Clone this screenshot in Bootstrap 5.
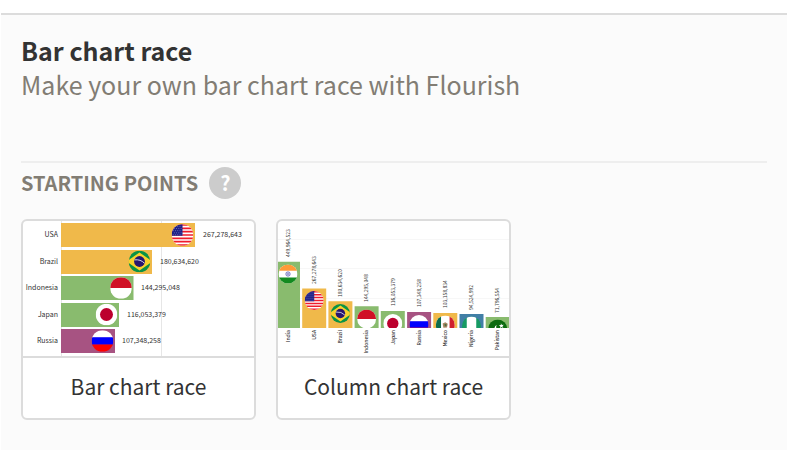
<!DOCTYPE html>
<html lang="en">
<head>
<meta charset="utf-8">
<meta name="viewport" content="width=device-width, initial-scale=1">
<title>Bar chart race</title>
<link href="https://cdn.jsdelivr.net/npm/bootstrap@5.3.0/dist/css/bootstrap.min.css" rel="stylesheet">
<style>
body { font-family: "Noto Sans CJK SC", "Noto Sans", sans-serif; color: #333; background: #fff; }
.template-group { margin: 13px 19px 6px 1px; padding: 18px 20px 30px; background: #fbfbfb; border-top: 2px solid #dcdcdc; }
.template-title { font-size: 25px; line-height: 34px; }
.template-intro { font-size: 25px; line-height: 34px; color: #827d74; }
.starting-points { margin-top: 60px; padding-top: 4px; border-top: 2px solid #eee; }
.section-heading { gap: 11px; }
.section-label { font-size: 20px; line-height: 32px; color: #827d74; }
.help-button { width: 32px; height: 32px; font-size: 20px; line-height: 32px; color: #fff; background: #ccc; }
.tile-list { gap: 20px; margin-top: 20px; }
.tile { flex: 0 1 235px; color: #333; background: #fff; border: 2px solid #dcdcdc; border-radius: 6px; overflow: hidden; }
.tile-name { padding: 12px 0 16px; font-size: 21px; line-height: 32px; border-top: 2px solid #dcdcdc; }
.bar-text { font-size: 7px; fill: #333; }
.column-text { font-size: 5px; fill: #333; }
.orange { fill: #f0b94a; } .green { fill: #89bb6e; } .purple { fill: #a75382; } .blue { fill: #417fa6; }
</style>
<script src="https://cdn.jsdelivr.net/npm/bootstrap@5.3.0/dist/js/bootstrap.bundle.min.js"></script>
</head>
<body>
<svg width="0" height="0" class="position-absolute" aria-hidden="true">
  <defs>
    <clipPath id="disc"><circle r="10"/></clipPath>
    <g id="flag-usa" clip-path="url(#disc)">
      <path fill="#fff" d="M-10-10h20v20h-20z"/>
      <path stroke="#f01c2c" stroke-width="1.54" d="M-10-9.23h20M-10-6.15h20M-10-3.08h20M-10 0h20M-10 3.08h20M-10 6.15h20M-10 9.23h20"/>
      <path fill="#1d1f87" d="M-10-10H0V.8h-10z"/>
      <path stroke="#8d8fc6" stroke-width=".7" stroke-dasharray=".8 1.3" d="M-9-8H0M-8-6H0M-9-4H0M-8-2H0M-9-.2H0"/>
    </g>
    <g id="flag-brazil" clip-path="url(#disc)">
      <path fill="#0a9345" d="M-10-10h20v20h-20z"/>
      <path fill="#f8d22c" d="M-12 0 0-8.4 12 0 0 8.4z"/>
      <circle r="5" fill="#29166f"/>
      <path fill="none" stroke="#d9dff0" stroke-width=".9" d="M-4.6-1.5Q1-2.2 4.6 1.6"/>
    </g>
    <g id="flag-indonesia" clip-path="url(#disc)"><path fill="#fff" d="M-10-10h20v20h-20z"/><path fill="#d01126" d="M-10-10h20V0h-20z"/></g>
    <g id="flag-japan" clip-path="url(#disc)"><path fill="#fff" d="M-10-10h20v20h-20z"/><circle r="6" fill="#bc002d"/></g>
    <g id="flag-russia" clip-path="url(#disc)"><path fill="#fff" d="M-10-10h20v7h-20z"/><path fill="#00f" d="M-10-3.5h20v7h-20z"/><path fill="#f00" d="M-10 3.3h20V10h-20z"/></g>
    <g id="flag-india" clip-path="url(#disc)"><path fill="#fff" d="M-10-10h20v20h-20z"/><path fill="#ff9a38" d="M-10-10h20v6.7h-20z"/><path fill="#138a20" d="M-10 3.6h20V10h-20z"/><circle r="2.3" fill="#dfe0f2" stroke="#4747a8" stroke-width=".7"/><circle r=".8" fill="#4747a8"/></g>
    <g id="flag-mexico" clip-path="url(#disc)"><path fill="#fff" d="M-10-10h20v20h-20z"/><path fill="#0b6b4b" d="M-10-10h5.5v20H-10z"/><path fill="#d0202d" d="M4.5-10H10v20H4.5z"/><path fill="#a98763" d="M-2.8-1.6 0-3l2.6 1.8L1.8 2.5-2 3z"/><path fill="#4e6c43" d="M-1-.8 1-1.4l.4 2.2-1.8.8z"/></g>
    <g id="flag-nigeria" clip-path="url(#disc)"><path fill="#169a63" d="M-10-10h20v20h-20z"/><path fill="#fff" d="M-5-10H5v20H-5z"/></g>
    <g id="flag-pakistan" clip-path="url(#disc)"><path fill="#0b6b0f" d="M-10-10h20v20h-20z"/><path fill="#fff" d="M-1-4.5A5 5 0 1 0 6 2 5 5 0 0 1-1-4.5zM3.4-6l1 1.9 2-.3-1.4 1.5.9 1.9-2-1L2.500-.6l.3-2-1.500-1.400 2-.3z"/></g>
    <clipPath id="plot"><path d="M0 0h231v107H0z"/></clipPath>
  </defs>
</svg>

<main class="template-group">
  <header>
    <h1 class="template-title fw-bold mb-0">Bar chart race</h1>
    <p class="template-intro mb-0">Make your own bar chart race with Flourish</p>
  </header>

  <section class="starting-points" aria-labelledby="starting-label">
    <div class="section-heading d-flex align-items-center">
      <h2 id="starting-label" class="section-label fw-bold mb-0">STARTING POINTS</h2>
      <button type="button" class="help-button btn rounded-circle border-0 p-0 fw-bold" aria-label="Help">?</button>
    </div>

    <div class="tile-list d-flex">
      <a href="#" class="tile d-flex flex-column text-decoration-none">
        <svg class="d-block w-100" viewBox="0 0 231 135" role="img" aria-label="Bar chart by country">
          <path d="M38.500 0v135M138.500 0v135" stroke="#e6e6e6"/>
          <path class="orange" d="M38 2h134v24H38zM38 29h91v24H38z"/>
          <path class="green" d="M38 55h72.500v24H38zM38 82h58v24H38z"/>
          <path class="purple" d="M38 108h54v24H38z"/>
          <use href="#flag-usa" transform="translate(159.500 14) scale(1.08)"/>
          <use href="#flag-brazil" transform="translate(116.500 40.500) scale(1.08)"/>
          <use href="#flag-indonesia" transform="translate(98 67) scale(1.08)"/>
          <use href="#flag-japan" transform="translate(83.500 93.500) scale(1.08)"/>
          <use href="#flag-russia" transform="translate(79.500 120) scale(1.08)"/>
          <g class="bar-text" text-anchor="end">
            <text x="35" y="16">USA</text><text x="35" y="43">Brazil</text><text x="35" y="69">Indonesia</text><text x="35" y="96">Japan</text><text x="35" y="122">Russia</text>
          </g>
          <g class="bar-text">
            <text x="180" y="16">267,278,643</text><text x="137" y="43">180,634,620</text><text x="118" y="69">144,295,048</text><text x="104" y="96">116,053,379</text><text x="99" y="122">107,348,258</text>
          </g>
        </svg>
        <span class="tile-name text-center">Bar chart race</span>
      </a>

      <a href="#" class="tile d-flex flex-column text-decoration-none">
        <svg class="d-block w-100" viewBox="0 0 231 135" role="img" aria-label="Column chart by country">
          <path d="M0 18.500h231M0 47.500h231M0 77.500h231" stroke="#f7f7f7"/>
          <g clip-path="url(#plot)">
            <path class="green" d="M-2 40.700h24V107H-2zM76.600 85.300h24V107h-24zM102.800 90h24v17h-24zM207.700 96h24v11h-24z"/>
            <path class="orange" d="M24.200 67.500h24V107h-24zM50.400 80.300h24V107h-24zM155.300 92h24v15h-24z"/>
            <path class="purple" d="M129.100 91h24v16h-24z"/>
            <path class="blue" d="M181.500 93h24v14h-24z"/>
            <use href="#flag-india" transform="translate(10 53) scale(.95)"/>
            <use href="#flag-usa" transform="translate(36.200 79.500) scale(.95)"/>
            <use href="#flag-brazil" transform="translate(62.400 92.500) scale(.95)"/>
            <use href="#flag-indonesia" transform="translate(88.600 98) scale(.95)"/>
            <use href="#flag-japan" transform="translate(114.800 102.500) scale(.95)"/>
            <use href="#flag-russia" transform="translate(141 103.500) scale(.95)"/>
            <use href="#flag-mexico" transform="translate(167.300 104) scale(.95)"/>
            <use href="#flag-nigeria" transform="translate(193.500 105) scale(.95)"/>
            <use href="#flag-pakistan" transform="translate(219.700 108) scale(.95)"/>
          </g>
          <g class="column-text" transform="rotate(-90)">
            <text x="-36" y="12">449,964,523</text><text x="-63" y="38">267,278,643</text><text x="-76" y="64">180,634,620</text><text x="-81" y="90">144,295,048</text><text x="-85" y="117">116,053,379</text><text x="-86" y="143">107,348,258</text><text x="-87" y="169">103,158,834</text><text x="-89" y="195">94,524,992</text><text x="-92" y="221">71,796,554</text>
          </g>
          <g class="column-text" transform="rotate(-90)" text-anchor="end" font-weight="500">
            <text x="-109" y="12">India</text><text x="-109" y="38">USA</text><text x="-109" y="64">Brazil</text><text x="-109" y="90">Indonesia</text><text x="-109" y="117">Japan</text><text x="-109" y="143">Russia</text><text x="-109" y="169">Mexico</text><text x="-109" y="195">Nigeria</text><text x="-109" y="221">Pakistan</text>
          </g>
        </svg>
        <span class="tile-name text-center">Column chart race</span>
      </a>
    </div>
  </section>
</main>
</body>
</html>
